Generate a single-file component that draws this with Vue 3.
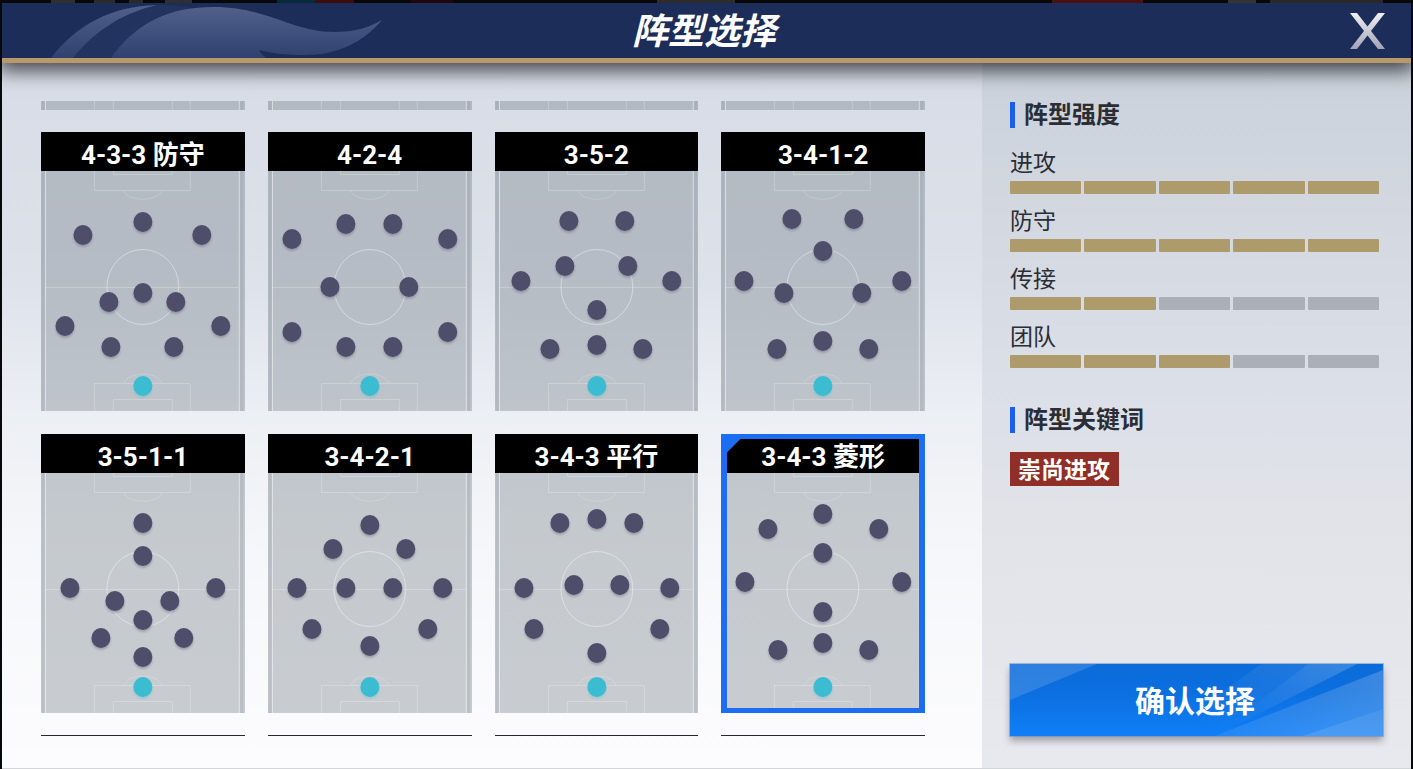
<script setup>
import { ref } from 'vue'

const formations = [
  {
    name: '4-3-3 防守',
    keeper: 215,
    players: [[102, 51], [42, 64], [161, 64], [102, 122], [68, 131], [135, 131], [24, 155], [180, 155], [70, 176], [133, 176]]
  },
  {
    name: '4-2-4',
    keeper: 215,
    players: [[78, 53], [125, 53], [24, 68], [180, 68], [62, 116], [141, 116], [24, 161], [180, 161], [78, 176], [125, 176]]
  },
  {
    name: '3-5-2',
    keeper: 215,
    players: [[74, 50], [130, 50], [70, 95], [133, 95], [26, 110], [177, 110], [102, 139], [102, 174], [55, 178], [148, 178]]
  },
  {
    name: '3-4-1-2',
    keeper: 215,
    players: [[71, 48], [133, 48], [102, 80], [23, 110], [181, 110], [63, 122], [141, 122], [102, 170], [56, 178], [148, 178]]
  },
  {
    name: '3-5-1-1',
    keeper: 214,
    players: [[102, 50], [102, 83], [29, 115], [175, 115], [74, 128], [129, 128], [102, 147], [60, 165], [143, 165], [102, 184]]
  },
  {
    name: '3-4-2-1',
    keeper: 214,
    players: [[102, 52], [65, 76], [138, 76], [29, 115], [78, 115], [125, 115], [175, 115], [44, 156], [160, 156], [102, 173]]
  },
  {
    name: '3-4-3 平行',
    keeper: 214,
    players: [[65, 50], [102, 46], [139, 50], [29, 115], [175, 115], [79, 112], [125, 112], [39, 156], [165, 156], [102, 180]]
  },
  {
    name: '3-4-3 菱形',
    keeper: 214,
    players: [[102, 41], [47, 56], [158, 56], [102, 80], [24, 109], [181, 109], [102, 139], [102, 170], [57, 177], [148, 177]]
  }
]

const selected = ref('3-4-3 菱形')

const strengths = [
  { label: '进攻', value: 5 },
  { label: '防守', value: 5 },
  { label: '传接', value: 2 },
  { label: '团队', value: 3 }
]
</script>

<template>
  <div class="screen">
    <svg class="defs" width="0" height="0" aria-hidden="true">
      <defs>
        <symbol id="pitch" viewBox="0 0 204 240" preserveAspectRatio="none">
          <g fill="none" stroke="#fff" stroke-opacity=".24">
            <path d="M4.500 0V240M198.500 0V240" stroke-opacity=".5" />
            <path d="M2 0V240M201 0V240" stroke="#8e98a2" stroke-opacity=".25" stroke-width="3" />
            <path d="M4 116.500H198" />
            <ellipse cx="102" cy="116" rx="36" ry="37.500" stroke-opacity=".42" />
            <path d="M53.500 0V19.500H149.500V0M72.500 0V3.500H131.500V0" />
            <path d="M53.500 240V212.500H149.500V240M72.500 240V228.500H131.500V240" />
            <path d="M83 20C88 31 116 31 121 20M83 212C88 200 116 200 121 212" stroke-opacity=".2" />
          </g>
        </symbol>
      </defs>
    </svg>

    <div class="backdrop" aria-hidden="true"></div>

    <main class="dialog">
      <header class="titlebar">
        <svg class="crest" viewBox="0 0 400 55" aria-hidden="true">
          <defs>
            <linearGradient id="wave" x1="0" y1="0" x2="0" y2="1">
              <stop offset="0" stop-color="#50608a" />
              <stop offset="1" stop-color="#304170" />
            </linearGradient>
          </defs>
          <path d="M71 55C92 26 126 5 158 2C174 2 188 4 198 7C158 12 130 30 109 55Z" fill="#22335f" />
          <path d="M49 55C74 22 110 3 155 2C124 9 94 26 71 55Z" fill="url(#wave)" />
          <path d="M109 55C134 20 166 4 212 4C265 4 290 29 332 29C353 29 366 25 380 17C361 39 337 52 302 52C283 52 269 50 257 47C259 51 262 53 264 55Z" fill="url(#wave)" />
        </svg>
        <h1>阵型选择</h1>
        <button class="close" type="button" aria-label="关闭">
          <svg viewBox="0 0 35 36" aria-hidden="true">
            <defs>
              <linearGradient id="steel" x1="0" y1="0" x2="0" y2="1">
                <stop offset="0" stop-color="#f0f0f4" />
                <stop offset="1" stop-color="#a3a3b6" />
              </linearGradient>
            </defs>
            <path d="M0 0H7L17.500 13.500L28 0H35L21 18L35 36H28L17.500 22.500L7 36H0L14 18Z" fill="url(#steel)" />
          </svg>
        </button>
      </header>

      <div class="body">
        <section class="library" aria-label="阵型选择">
          <div class="row peek-tail" aria-hidden="true">
            <div v-for="n in 4" :key="n" class="slice">
              <svg class="pitch"><use href="#pitch" /></svg>
            </div>
          </div>

          <div class="row cards">
            <button
              v-for="f in formations"
              :key="f.name"
              type="button"
              class="card"
              :class="{ active: f.name === selected }"
              :aria-pressed="f.name === selected"
              @click="selected = f.name"
            >
              <span class="name">{{ f.name }}</span>
              <svg class="pitch" viewBox="0 0 204 240" preserveAspectRatio="none" aria-hidden="true">
                <use href="#pitch" width="204" height="240" />
                <g class="players">
                  <ellipse v-for="(p, i) in f.players" :key="i" :cx="p[0]" :cy="p[1]" rx="9.500" ry="10" />
                </g>
                <ellipse class="keeper" cx="102" :cy="f.keeper" rx="9.500" ry="10" />
              </svg>
            </button>
          </div>

          <div class="row peek-head" aria-hidden="true">
            <div v-for="n in 4" :key="n" class="edge"></div>
          </div>
        </section>

        <aside class="details">
          <h2>阵型强度</h2>
          <ul class="strengths">
            <li v-for="s in strengths" :key="s.label">
              <span class="label">{{ s.label }}</span>
              <div class="meter" role="meter" :aria-label="s.label" aria-valuemin="0" aria-valuemax="5" :aria-valuenow="s.value">
                <i v-for="n in 5" :key="n" :class="{ on: n <= s.value }"></i>
              </div>
            </li>
          </ul>
          <h2>阵型关键词</h2>
          <span class="tag">崇尚进攻</span>
          <button class="confirm" type="button">
            <svg viewBox="0 0 374 72" preserveAspectRatio="none" aria-hidden="true">
              <defs>
                <linearGradient id="beam" x1="0" y1="1" x2="1" y2="0">
                  <stop offset="0.200" stop-color="#fff" stop-opacity="0" />
                  <stop offset="1" stop-color="#fff" stop-opacity=".1" />
                </linearGradient>
                <linearGradient id="ray" x1="0" y1="0" x2="1" y2="0">
                  <stop offset="0" stop-color="#dfe6ee" stop-opacity=".08" />
                  <stop offset="1" stop-color="#dfe6ee" stop-opacity=".22" />
                </linearGradient>
              </defs>
              <path d="M0 0H87L0 36Z" fill="#fff" fill-opacity=".14" />
              <path d="M252 0H348L205 72H150Z" fill="url(#beam)" />
              <path d="M299 0H348L205 72Z" fill="url(#beam)" />
              <path d="M374 6V45L293 72H205Z" fill="url(#ray)" />
              <path d="M374 45V72H293Z" fill="#dfe6ee" fill-opacity=".28" />
            </svg>
            <span>确认选择</span>
          </button>
        </aside>
      </div>
    </main>
  </div>
</template>

<style>
body {
  margin: 0;
  background: #07080b;
}
</style>

<style scoped>
* {
  box-sizing: border-box;
}

.screen {
  display: flex;
  flex-direction: column;
  min-height: 100vh;
  padding: 0 2px;
  background: #07080b;
  color: #2a2d35;
  font-family: "Noto Sans CJK SC", sans-serif;
}

.defs {
  position: absolute;
}

.backdrop {
  height: 3px;
  background: linear-gradient(90deg,
    #08080b 0 3.5%, #303032 3.5% 5.2%, #08080b 5.2% 6.5%, #2b2b2d 6.5% 8%, #08080b 8% 9%,
    #2a2a2c 9% 10%, #08080b 10% 11.6%, #303032 11.6% 13.5%, #08080b 13.5% 19.5%,
    #08293a 19.5% 22.2%, #3c0c0e 22.2% 25%, #08080b 25% 29%, #1e0710 29% 32%,
    #08080b 32% 46.5%, #2c2c2e 46.5% 52%, #08080b 52% 74.5%, #4b1110 74.5% 81%,
    #08080b 81% 87%, #343436 87% 89%, #08080b 89% 90%, #29292b 90% 98%, #08080b 98%);
}

.dialog {
  flex: 1;
  display: flex;
  flex-direction: column;
  border-bottom: 1px solid #d3d6d8;
}

.titlebar {
  position: relative;
  z-index: 1;
  display: flex;
  align-items: flex-start;
  justify-content: center;
  height: 60px;
  padding-right: 5px;
  border-bottom: 5px solid #b7996b;
  background: #1b2d58;
  box-shadow: 0 5px 18px 3px rgba(20, 22, 26, .75);
  clip-path: inset(0 0 -40px 0);
}

.crest {
  position: absolute;
  left: 0;
  top: 0;
  width: 400px;
  height: 55px;
}

h1 {
  position: relative;
  margin: 0;
  color: #fff;
  font-size: 36px;
  font-style: italic;
  font-weight: 700;
  line-height: 50px;
}

.close {
  position: absolute;
  top: 10px;
  right: 26px;
  width: 35px;
  height: 36px;
  padding: 0;
  border: 0;
  background: none;
  cursor: pointer;
}

.close svg {
  display: block;
  width: 100%;
  height: 100%;
}

.body {
  flex: 1;
  display: grid;
  grid-template-columns: minmax(0, 1fr) 429px;
  background: linear-gradient(180deg, #d7dce6 0%, #dde1ea 30%, #eceff4 50%, #f6f7fa 70%, #fcfcfe 100%);
}

.library {
  display: flex;
  flex-direction: column;
  gap: 22px;
  padding: 38px 57px 32px 39px;
}

.row {
  display: grid;
  grid-template-columns: repeat(4, minmax(0, 1fr));
  gap: 23px;
}

.slice {
  display: flex;
  align-items: flex-end;
  height: 9px;
  overflow: hidden;
}

.slice .pitch {
  flex: none;
}

.edge {
  height: 1px;
  background: #25272b;
}

.card {
  position: relative;
  display: flex;
  flex-direction: column;
  padding: 0;
  border: 0;
  background: none;
  cursor: pointer;
}

.name {
  width: 100%;
  height: 39px;
  background: #000;
  color: #fff;
  font-family: Roboto, "Noto Sans CJK SC", sans-serif;
  font-size: 26px;
  font-weight: 700;
  line-height: 46px;
  text-align: center;
}

.pitch {
  display: block;
  width: 100%;
  height: 240px;
  background: rgba(113, 126, 132, .37);
}

.players {
  fill: #4f4e6a;
  filter: drop-shadow(0 2px 1px rgba(79, 78, 106, .35));
}

.keeper {
  fill: #3bbcd0;
  filter: drop-shadow(0 2px 1px rgba(59, 188, 208, .3));
}

.card.active::after {
  content: "";
  position: absolute;
  inset: 0;
  border: 5px solid #1d6df2;
  border-width: 5px 6px;
  background: linear-gradient(135deg, #1d6df2 9px, transparent 10px);
}

.details {
  display: flex;
  flex-direction: column;
  align-items: flex-start;
  padding: 39px 28px 32px;
  background: linear-gradient(180deg, #cbd2db 0%, #d2d7e0 20%, #dbdfe8 45%, #e1e3e8 65%, #e7e9ee 100%);
}

h2 {
  margin: 0;
  padding: 0 0 4px 9px;
  border-left: 5px solid #1c5eea;
  font-size: 24px;
  font-weight: 700;
  line-height: 22px;
}

.strengths {
  display: grid;
  gap: 10px;
  align-self: stretch;
  margin: 18px 4px 39px 0;
  padding: 0;
  list-style: none;
}

.label {
  display: block;
  margin-bottom: 5px;
  font-size: 23px;
  line-height: 30px;
}

.meter {
  display: grid;
  grid-template-columns: repeat(5, 1fr);
  gap: 3px;
}

.meter i {
  height: 13px;
  border-radius: 1px;
  background: #abafb8;
}

.meter i.on {
  background: #ae9b6b;
}

.tag {
  margin-top: 19px;
  padding: 0 9px 2px 8px;
  background: #902e28;
  color: #fff;
  font-size: 23px;
  font-weight: 700;
  line-height: 32px;
}

.confirm {
  position: relative;
  align-self: stretch;
  height: 72px;
  margin-top: auto;
  padding: 0 3px 2px 0;
  border: 0;
  background: linear-gradient(180deg, #0b6bd9 0%, #0c6fe0 40%, #107ff7 100%);
  box-shadow: 0 0 0 1px rgba(90, 140, 200, .5), 0 5px 7px rgba(60, 50, 60, .4);
  color: #fff;
  font-family: inherit;
  font-size: 30px;
  font-weight: 700;
  line-height: 70px;
  cursor: pointer;
}

.confirm svg {
  position: absolute;
  inset: 0;
  width: 100%;
  height: 100%;
}

.confirm span {
  position: relative;
}
</style>
